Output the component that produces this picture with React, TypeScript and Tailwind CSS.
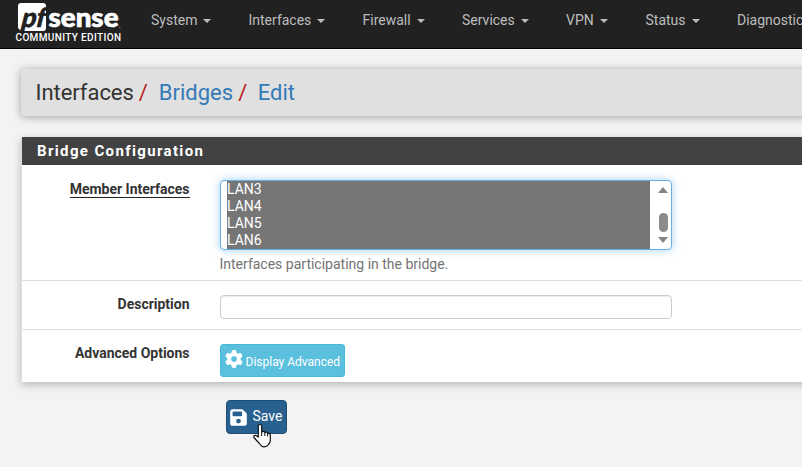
import React from "react";
import { FaGear, FaFloppyDisk } from "react-icons/fa6";

const navItems = [
  { label: "System", box: "w-[97.5px]" },
  { label: "Interfaces", box: "w-[114px]" },
  { label: "Firewall", box: "w-[99.5px]" },
  { label: "Services", box: "w-[104px]" },
  { label: "VPN", box: "w-[79.5px]" },
  { label: "Status", box: "w-[91.5px]" },
  { label: "Diagnostics", box: "w-[110px]" },
];

const members = ["LAN3", "LAN4", "LAN5", "LAN6"];

function Logo() {
  return (
    <svg width="110" height="44" viewBox="14 0 110 44" className="block shrink-0">
      <path d="M21 3H43Q46 3 46 6V28Q46 31 43 31H21L18 28V6Q18 3 21 3Z" fill="#fff" />
      <text transform="translate(20 26.5) skewX(-14)" fontFamily="Lato" fontWeight="900" fontSize="27" textLength="24" lengthAdjust="spacingAndGlyphs" fill="#212121" stroke="#212121" strokeWidth="0.5">pf</text>
      <text x="48.5" y="27" fontFamily="Lato" fontWeight="900" fontSize="27" textLength="70" lengthAdjust="spacingAndGlyphs" fill="#fff" stroke="#fff" strokeWidth="0.7">sense</text>
      <circle cx="119.8" cy="27.3" r="0.8" fill="#777" />
      <text x="15.5" y="41" fontFamily="Roboto" fontWeight="500" fontSize="10" textLength="105.5" fill="#fff">COMMUNITY EDITION</text>
    </svg>
  );
}

function Row({ label, className, children }: { label: React.ReactNode; className: string; children: React.ReactNode }) {
  return (
    <div className={"flex " + className}>
      <div className="-mt-px w-[167.5px] shrink-0 text-right font-bold leading-5 tracking-[-0.01px]">{label}</div>
      <div className="ml-[30.5px]">{children}</div>
    </div>
  );
}

export default function App() {
  return (
    <div className="relative h-[467px] w-[802px] overflow-hidden bg-[#f3f3f3] font-[Roboto,sans-serif] text-[14px] leading-5 text-[#333]">
      <nav className="flex h-[49px] overflow-hidden border-b border-black bg-[#212121] pl-[14px]">
        <Logo />
        <div className="ml-[27px] flex shrink-0 pt-[10px] text-[#bdbdbd]">
          {navItems.map((n) => (
            <div key={n.label} className={"flex h-5 shrink-0 items-center " + n.box}>
              {n.label}
              <span className="ml-[6px] mt-[2px] border-x-4 border-t-4 border-x-transparent border-t-[#bdbdbd]" />
            </div>
          ))}
        </div>
      </nav>
      <header className="ml-[21px] mt-5 flex h-[47px] w-[830px] items-center rounded-[3px] bg-[#e0e0e0] pl-[14.5px] text-[22px] shadow-[0_1px_8px_rgba(0,0,0,0.35)]">
        <span className="tracking-[-0.05px]">Interfaces</span>
        <span className="ml-[5px] text-[#b71c1c]">/</span>
        <a className="ml-[11px] text-[#337ab7]">Bridges</a>
        <span className="ml-[5px] text-[#b71c1c]">/</span>
        <a className="ml-[10.5px] text-[#337ab7]">Edit</a>
      </header>
      <main className="ml-[21px] mt-[21px] h-[245px] w-[830px] border-l border-[#ddd] bg-white shadow-[0_3px_8px_rgba(0,0,0,0.24)]">
        <h2 className="flex h-[28px] items-center bg-[#424242] pl-[15px] text-[15px] font-bold tracking-[1.36px] text-white">Bridge Configuration</h2>
        <Row className="h-[116px] border-b border-[#ddd] pt-[15px]" label={<span className="inline-block h-[17px] border-b border-[#222] leading-[17px]">Member Interfaces</span>}>
          <div className="flex h-[70px] w-[452px] overflow-hidden rounded-[4px] border border-[#66afe9] bg-white pl-[6px] shadow-[0_0_8px_rgba(102,175,233,0.6)]">
            <div className="w-[423px] bg-[#767676] leading-[17px] text-white">
              {members.map((m) => (
                <div key={m} className="h-[17px]">{m}</div>
              ))}
            </div>
            <div className="flex w-[21px] flex-col items-center pl-[5px]">
              <span className="mt-[6px] border-x-[5px] border-b-[6px] border-x-transparent border-b-[#858585]" />
              <span className="mt-5 h-[19px] w-[9px] rounded-full bg-[#8b8b8b]" />
              <span className="mt-[5px] border-x-[5px] border-t-[6px] border-x-transparent border-t-[#858585]" />
            </div>
          </div>
          <p className="-ml-[0.5px] mt-[4px] text-[#737373]">Interfaces participating in the bridge.</p>
        </Row>
        <Row className="h-[49px] border-b border-[#ddd] pt-[14px]" label="Description">
          <div className="h-6 w-[452px] rounded-[4px] border border-[#ccc] bg-white shadow-[inset_0_1px_1px_rgba(0,0,0,0.075)]" />
        </Row>
        <Row className="h-[52px] pt-[14px]" label="Advanced Options">
          <button className="flex h-[33px] w-[125px] items-center rounded-[3px] border border-[#46b8da] bg-[#5bc0de] pl-[4px] text-[12px] text-white">
            <FaGear size={18} className="-mt-[3px] shrink-0" />
            <span className="ml-[2.5px] mt-[3px] whitespace-nowrap">Display Advanced</span>
          </button>
        </Row>
      </main>
      <button className="ml-[226px] mt-[18px] flex h-[34px] w-[61px] items-center rounded-[4px] border border-[#204d74] bg-[#286090] pl-[2px] text-white">
        <FaFloppyDisk size={19} className="shrink-0" />
        <span className="ml-[4.5px] -mt-[2px]">Save</span>
      </button>
      <svg className="absolute left-[252px] top-[423px]" width="20" height="25" viewBox="0 0 20 25">
        <path d="M6.3 14V3.2Q6.3 1.5 8 1.5T9.7 3.2V9Q12.5 7.5 13 9.5Q15.2 8.5 15.8 10.5Q18.3 9.8 18.3 12.2V17Q18.3 19.5 16.5 21.5Q15 23.8 12 23.8Q9.5 23.8 8 21.2Q5 18 2 14.5Q1.2 12.7 3 12.3Q4.7 12.2 6.3 14Z" fill="#fff" stroke="#111" strokeWidth="1.2" strokeLinejoin="round" />
        <path d="M9.7 9V13M12.8 9.5V13M15.7 10.5V13.5" stroke="#111" strokeWidth="1" />
      </svg>
    </div>
  );
}
